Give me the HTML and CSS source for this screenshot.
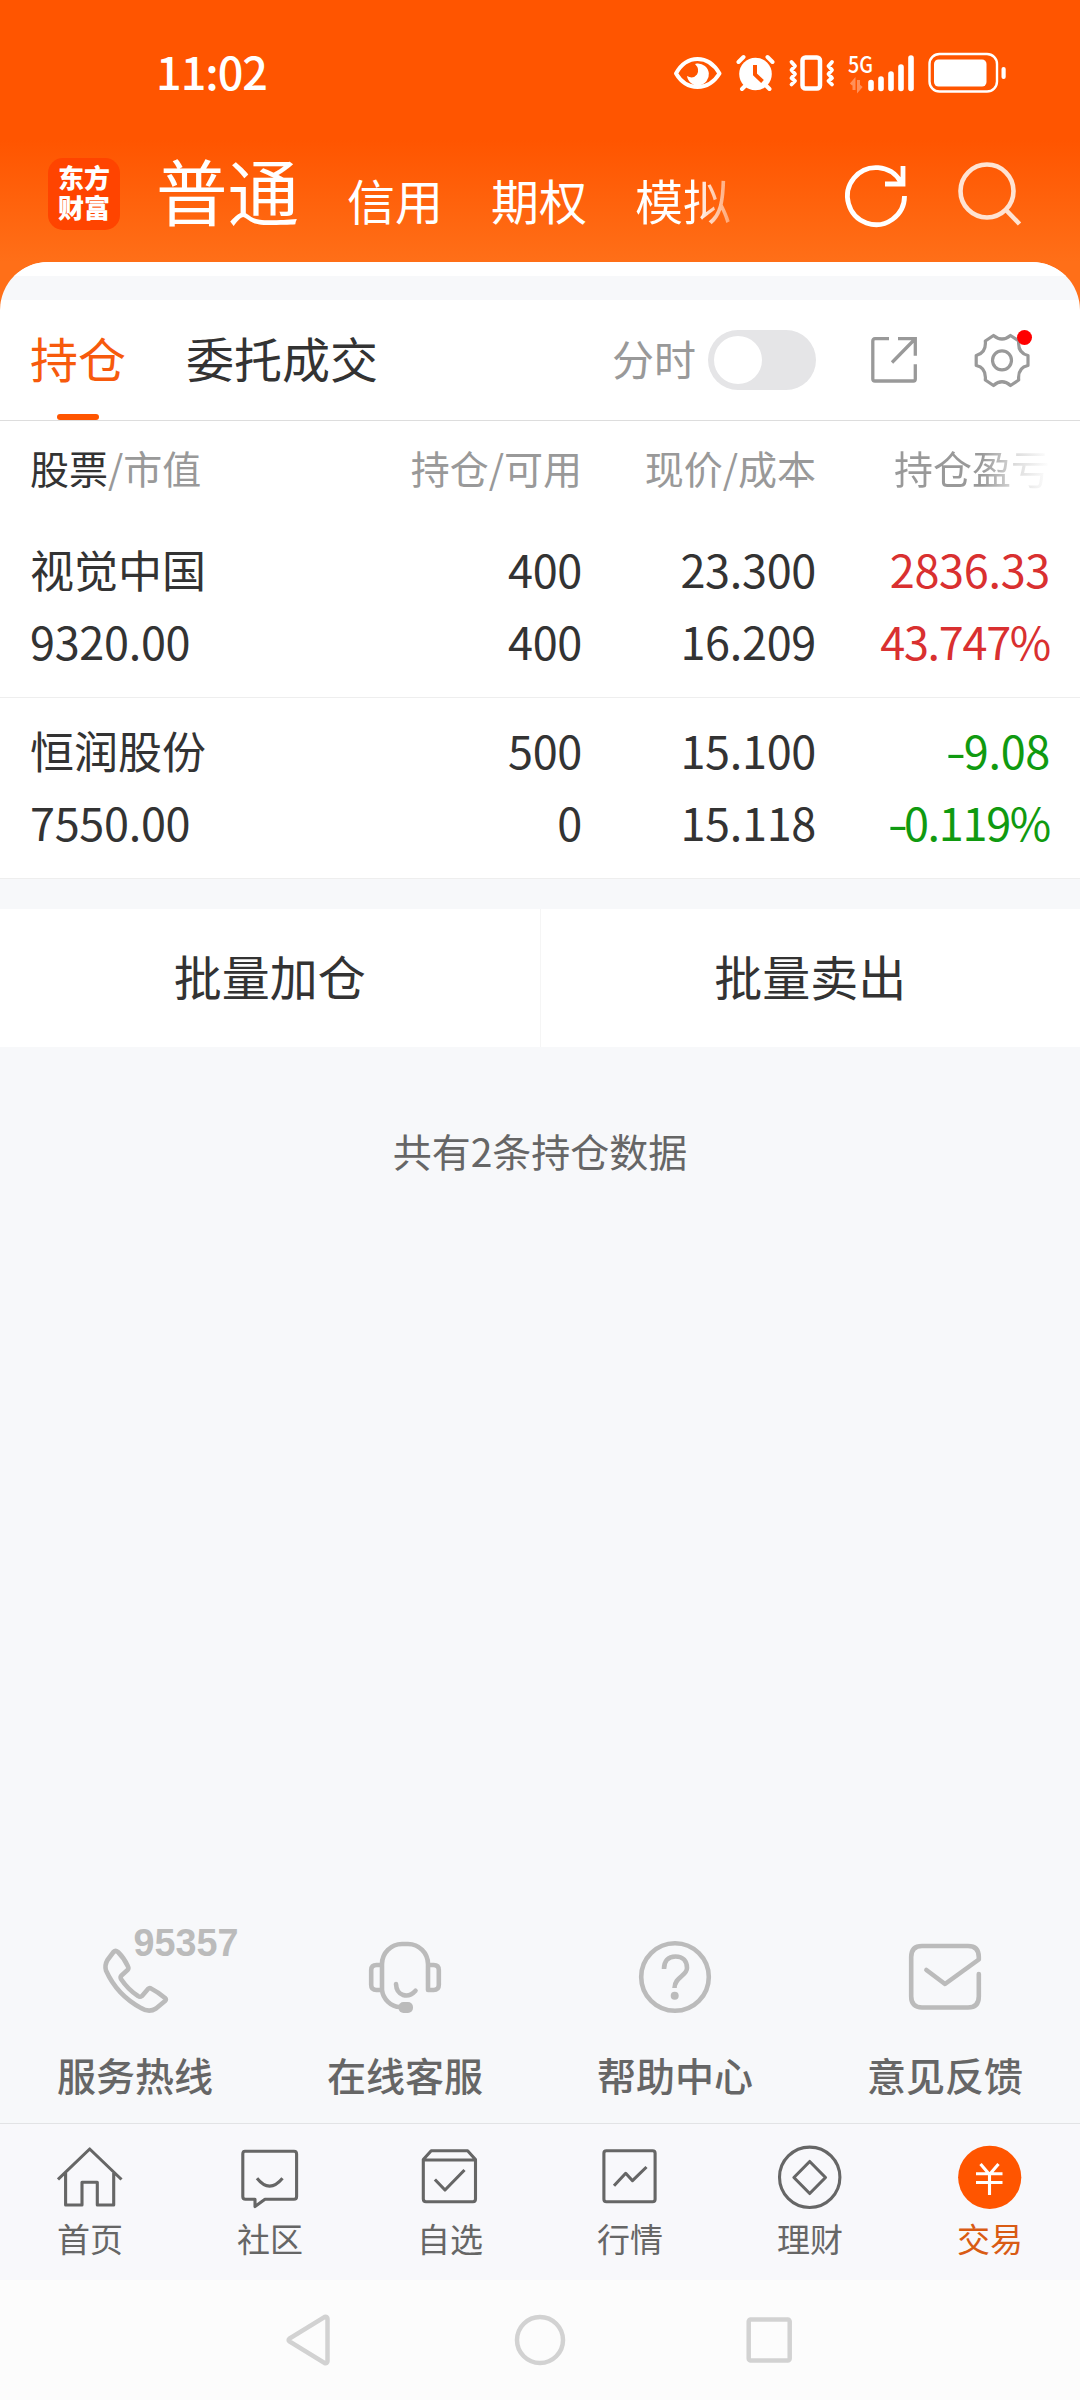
FILE: index.html
```html
<!DOCTYPE html>
<html lang="zh-CN">
<head>
<meta charset="utf-8">
<title>交易 - 持仓</title>
<link rel="stylesheet" href="styles.css">
</head>
<body>
<div class="screen">
  <header class="top">
    <div class="status">
      <span class="time">11:02</span>
      <svg class="status-icons" viewBox="670 43 340 60" fill="none" stroke="#fff">
        <path d="M676 73.500Q684 59 697.500 59T719.500 73.500Q711 87 697.500 87T676 73.500Z" stroke-width="4" stroke-linejoin="round"/>
        <path d="M697 63.500A11 11 0 1 1 687 76Q693 79.500 697 74.500Q700 69 695 64Z" fill="#fff" stroke="none"/>
        <circle cx="755.500" cy="74" r="16.300" fill="#fff" stroke="none"/>
        <path d="M738.500 62L743.500 57M772.500 62L767.500 57M742 89L746 85M769.500 89L765.500 85" stroke-width="4" stroke-linecap="round"/>
        <path d="M755 65V74.500L762.500 81.500" stroke="#ff5500" stroke-width="4"/>
        <rect x="802.500" y="57.500" width="17.500" height="31" rx="3" stroke-width="4.500"/>
        <path d="M791.500 62L795 66L791.500 70L795 74L791.500 78L795 81L791.500 84.500M832 62L828.500 66L832 70L828.500 74L832 78L828.500 81L832 84.500" stroke-width="3.800" stroke-linecap="round" stroke-linejoin="round"/>
        <text class="net" x="848" y="73" textLength="25" lengthAdjust="spacingAndGlyphs">5G</text>
        <path d="M851 84.500L854 81V90M861.500 86L858.500 89.500V80" stroke-width="3" stroke-opacity=".35"/>
        <path d="M871 82.500V88.500M881 79V88.500M891 74V88.500M901 67V88.500M911 58V88.500" stroke-width="5.600" stroke-linecap="round"/>
        <rect x="929.500" y="54" width="67.500" height="37.500" rx="10" stroke-width="2.400"/>
        <rect x="934" y="59.500" width="52.500" height="27" rx="4.500" fill="#fff" stroke="none"/>
        <rect x="1001.500" y="67" width="4.200" height="12" rx="2" fill="#fff" stroke="none"/>
      </svg>
    </div>
    <div class="bar">
      <div class="logo">东方<br>财富</div>
      <nav class="accounts">
        <span class="account current">普通</span>
        <span class="account">信用</span>
        <span class="account">期权</span>
        <span class="account faded">模拟</span>
      </nav>
      <div class="bar-icons">
        <svg class="bar-icon" viewBox="0 0 72 72" fill="none" stroke="#fff" stroke-width="4.800"><path d="M64.500 36A28.500 28.500 0 1 1 60.500 21.500M63 6V24H45"/></svg>
        <svg class="bar-icon" viewBox="0 0 72 72" fill="none" stroke="#ffe3d2" stroke-width="4.600"><circle cx="33" cy="31" r="26.500"/><path d="M52 50L65.500 64"/></svg>
      </div>
    </div>
  </header>

  <main class="sheet">
    <div class="sheet-cap"></div>
    <section class="panel">
      <div class="tabs">
        <span class="tab active">持仓</span>
        <span class="tab">委托成交</span>
        <div class="tools">
          <span class="tool-label">分时</span>
          <span class="switch"></span>
          <svg class="share" viewBox="0 0 50 50" fill="none" stroke="#999" stroke-width="3.300"><path d="M20 3.700H6Q3.800 3.700 3.800 6V44Q3.800 46 6 46H44.500Q46.300 46 46.300 44V29.300M29 3.700H46.300V20.700M45.500 4.500L23 27.500"/></svg>
          <span class="gear">
            <svg viewBox="0 0 60 60" fill="none" stroke="#999" stroke-width="3.200" stroke-linejoin="round"><path d="M21.500 5.500Q30 12.500 38.500 5.500L46.700 11Q45.500 23 56 25.500V35.500Q45.500 37.500 46.700 50L38.500 55.500Q30 48 21.500 55.500L13.300 50Q14.500 37.500 4.200 35.500V25.500Q14.500 23 13.300 11Z"/><circle cx="30" cy="30.300" r="9.500"/></svg>
          </span>
        </div>
      </div>

      <div class="row head">
        <span><b>股票</b>/市值</span>
        <span>持仓/可用</span>
        <span>现价/成本</span>
        <span class="head-fade">持仓盈亏</span>
      </div>
      <div class="row stock">
        <div>视觉中国<br><i>9320.00</i></div>
        <div><i>400</i><br><i>400</i></div>
        <div><i>23.300</i><br><i>16.209</i></div>
        <div class="up"><i>2836.33</i><br><i class="rate">43.747%</i></div>
      </div>
      <div class="row stock">
        <div>恒润股份<br><i>7550.00</i></div>
        <div><i>500</i><br><i>0</i></div>
        <div><i>15.100</i><br><i>15.118</i></div>
        <div class="down"><i><u>-</u>9.08</i><br><i class="rate"><u>-</u>0.119%</i></div>
      </div>
    </section>

    <div class="batch">
      <span>批量加仓</span>
      <span>批量卖出</span>
    </div>
    <p class="summary">共有2条持仓数据</p>
  </main>

  <section class="services">
    <div class="service">
      <svg viewBox="0 0 80 80"><path d="M18.500 15L12.500 23Q9.500 28 11 33.500Q22 58 46 71Q54 76 61 71.500L70 64Q71.500 62.500 70 61Q63 55 56 51.500Q54.500 50.500 53 52L47 59Q45 60.500 43 59Q33 52.500 26 42Q25 40 26.500 38.500L32.500 33Q34 31.500 33 29.500Q29.500 21.500 23 15Q20.500 13 18.500 15Z"/><text class="hotline" x="38.500" y="19" textLength="105" lengthAdjust="spacingAndGlyphs">95357</text></svg>
      <span>服务热线</span>
    </div>
    <div class="service">
      <svg viewBox="0 0 80 80"><path d="M17 53V27A20 20 0 0 1 37 7H43A20 20 0 0 1 63 27V53H68.500Q73.800 53 73.800 48V33Q73.800 28 68.500 28H63M17 28H11.500Q6.200 28 6.200 33V48Q6.200 53 11.500 53H17C18 62 26 70 35 70M31 47C31.500 59 43 62 50.500 53.700"/><rect class="solid" x="33.500" y="65" width="14.500" height="11" rx="5"/></svg>
      <span>在线客服</span>
    </div>
    <div class="service">
      <svg viewBox="0 0 80 80"><circle cx="40" cy="40" r="33.800"/><path class="butt" d="M29 32C29 24 33 19.500 40.500 19.500S52 24 52 31C52 39 39.500 40 39.500 51"/><circle class="solid" cx="39.700" cy="58.800" r="4"/></svg>
      <span>帮助中心</span>
    </div>
    <div class="service">
      <svg viewBox="0 0 80 80"><path d="M73.800 37V59.500Q73.800 70.500 63 70.500H17Q6.200 70.500 6.200 59.500V20Q6.200 9 17 9H63Q73.800 9 73.800 20V22.500L40 47L21.400 33"/></svg>
      <span>意见反馈</span>
    </div>
  </section>

  <nav class="tabbar">
    <div class="item"><svg viewBox="0 0 66 66"><path d="M1 35.500L32.700 5L64.500 35.500M8.600 29V61H25V38.300H40.300V61H56.700V29"/></svg><span>首页</span></div>
    <div class="item"><svg viewBox="0 0 66 66"><path d="M8 7.300H57Q59.600 7.300 59.600 10V52.500Q59.600 55.300 57 55.300H28L18 62.500V55.300H8.500Q5.800 55.300 5.800 52.500V10Q5.800 7.300 8 7.300ZM20 34.300Q32.500 50 45.500 34.300"/></svg><span>社区</span></div>
    <div class="item"><svg viewBox="0 0 66 66"><path d="M6.300 15.500V55Q6.300 57.700 9 57.700H56Q58.500 57.700 58.500 55V15.500L50.600 6.700H14.200ZM6.300 16H58.500M17.900 35.500L28 46L47.500 26"/></svg><span>自选</span></div>
    <div class="item"><svg viewBox="0 0 66 66"><rect x="6.900" y="6.700" width="51.200" height="51" rx="2.500"/><path d="M17 41.700L28.700 29.300L35.500 36.700L49.500 23"/></svg><span>行情</span></div>
    <div class="item"><svg viewBox="0 0 66 66"><circle cx="32.700" cy="33.300" r="30.200"/><path d="M32.700 17.500L48.500 33.500L32.700 49.500L16.900 33.500Z"/></svg><span>理财</span></div>
    <div class="item on"><svg viewBox="0 0 66 66"><circle class="disc" cx="32.700" cy="33.300" r="31.600"/><path class="yen" d="M23.500 20L32.500 30.500L41.500 20M19 29.700H45.500M19 38.500H45.500M32.500 30V51"/></svg><span>交易</span></div>
  </nav>

  <footer class="sysnav">
    <svg viewBox="0 0 60 60"><path d="M10.500 28.500Q9 30 10.500 31.500L45.500 53Q48.500 54 48.500 51V9Q48.500 6 45.500 7Z"/></svg>
    <svg viewBox="0 0 60 60"><circle cx="30" cy="30" r="23"/></svg>
    <svg viewBox="0 0 60 60"><rect x="7.700" y="9.500" width="41" height="41" rx="2"/></svg>
  </footer>
</div>
</body>
</html>
```
FILE: styles.css
```css
* { box-sizing: border-box; }
body {
  margin: 0;
  font-family: "Noto Sans CJK SC", "Noto Sans", sans-serif;
  color: #333;
}
svg { display: block; flex: none; }
.screen {
  width: 1080px;
  height: 2400px;
  display: flex;
  flex-direction: column;
  overflow: hidden;
  background: #f7f8fa;
}

/* orange header */
.top {
  flex: none;
  height: 310px;
  background: linear-gradient(#ff5500 0, #ff5500 140px, #ff6f18 262px);
}
.status {
  height: 146px;
  padding: 0 70px 0 156px;
  display: flex;
  align-items: center;
  justify-content: space-between;
  color: #fff;
}
.time { font-size: 45px; font-weight: 500; line-height: 60px; margin-top: -4px; letter-spacing: -1px; }
.status-icons { width: 340px; height: 60px; }
.net { font-size: 22.500px; font-weight: 500; fill: #fff; stroke: none; }
.bar {
  height: 112px;
  padding: 0 54px 0 48px;
  display: flex;
  align-items: flex-start;
  color: #fff;
}
.logo {
  width: 72px;
  height: 72px;
  margin: 12px 36px 0 0;
  padding-top: 4px;
  border-radius: 15px;
  background: #ff4400;
  text-align: center;
  font-size: 26px;
  font-weight: 900;
  line-height: 30px;
}
.accounts { display: flex; align-items: baseline; gap: 48px; margin-top: -1px; }
.account { font-size: 48px; line-height: 88px; }
.account.current { font-size: 71.500px; }
.faded {
  color: transparent;
  background: linear-gradient(90deg, #fff 60px, rgba(255, 255, 255, .4) 96px);
  -webkit-background-clip: text;
  background-clip: text;
}
.bar-icons { margin: 14px 0 0 auto; display: flex; gap: 42px; }
.bar-icon { width: 72px; height: 72px; }

/* white sheet */
.sheet {
  flex: 1;
  margin-top: -48px;
  border-radius: 48px 48px 0 0;
  overflow: hidden;
}
.sheet-cap { height: 38px; border-top: 14px solid #fff; background: #f7f8fa; }
.panel { background: #fff; }
.tabs {
  height: 121px;
  padding: 0 48px 0 30px;
  display: flex;
  align-items: center;
  gap: 60px;
  border-bottom: 1px solid #ddd;
}
.tab { position: relative; font-size: 48px; line-height: 120px; margin-top: -7px; }
.tab.active { color: #f75a0c; }
.tab.active::after {
  content: "";
  position: absolute;
  left: 27px;
  bottom: -3px;
  width: 42px;
  height: 6px;
  border-radius: 3px;
  background: #ff5500;
}
.tools { margin-left: auto; display: flex; align-items: center; }
.tool-label { font-size: 42px; line-height: 60px; color: #999; margin: -5px 12px 0 0; }
.switch {
  width: 108px;
  height: 60px;
  padding: 6px;
  border-radius: 30px;
  background: #e5e5e7;
}
.switch::before {
  content: "";
  display: block;
  width: 48px;
  height: 48px;
  border-radius: 50%;
  background: #fff;
}
.share { width: 50px; height: 50px; margin: 0 53px; }
.gear { position: relative; width: 60px; height: 60px; }
.gear::after {
  content: "";
  position: absolute;
  left: 45px;
  top: 0;
  width: 15px;
  height: 15px;
  border-radius: 50%;
  background: #f00;
}
.row {
  padding: 0 30px;
  display: grid;
  grid-template-columns: 318px 234px 234px 234px;
}
.row > * + * { text-align: right; }
.head { height: 96px; font-size: 39px; line-height: 92px; color: #999; }
.head b { font-weight: 400; color: #333; }
.head-fade {
  color: transparent;
  background: linear-gradient(90deg, #999 166px, #ddd 200px, #fff 234px);
  -webkit-background-clip: text;
  background-clip: text;
}
.stock {
  height: 181px;
  padding-top: 16px;
  font-size: 44px;
  line-height: 72px;
  border-bottom: 1px solid #eee;
}
.stock i { font-style: normal; font-size: 45px; letter-spacing: -.3px; }
.stock .rate { letter-spacing: -1.300px; }
/* the minus sign is drawn wider than the font's hyphen */
.stock u {
  display: inline-block;
  text-decoration: none;
  transform: scaleX(1.3);
}
.up { color: #d93030; }
.down { color: #109a10; }
.batch {
  height: 138px;
  margin-top: 30px;
  display: flex;
  background: #fff;
}
.batch span {
  flex: 1;
  text-align: center;
  font-size: 48px;
  line-height: 132px;
}
.batch span + span { border-left: 1px solid #f5f5f5; }
.summary {
  margin: 73px 0 0;
  text-align: center;
  font-size: 39px;
  line-height: 60px;
  color: #666;
}

/* service shortcuts */
.services { flex: none; height: 186px; display: flex; }
.service {
  flex: 1;
  display: flex;
  flex-direction: column;
  align-items: center;
  font-size: 39px;
  font-weight: 500;
  line-height: 60px;
  color: #666;
}
.service svg {
  width: 80px;
  height: 80px;
  margin-bottom: 27px;
  overflow: visible;
  fill: none;
  stroke: #bbb;
  stroke-width: 4.600;
  stroke-linecap: round;
  stroke-linejoin: round;
}
.service .solid, .service .hotline { fill: #bbb; stroke: none; }
.service .butt { stroke-linecap: butt; }
.hotline { font: 700 38px "Liberation Sans", sans-serif; }

/* app tab bar */
.tabbar {
  flex: none;
  height: 157px;
  border-top: 1px solid #e2e3e5;
  background: #f8f8fb;
  display: flex;
}
.item {
  flex: 1;
  padding-top: 20px;
  display: flex;
  flex-direction: column;
  align-items: center;
  font-size: 33px;
  line-height: 48px;
  color: #666;
}
.item svg {
  width: 66px;
  height: 66px;
  margin-bottom: 4px;
  fill: none;
  stroke: #666;
  stroke-width: 3.100;
  stroke-linejoin: round;
}
.item.on { color: #d95b14; }
.item .disc { fill: #ff5500; stroke: none; }
.item .yen { stroke: #fff; }

/* system navigation */
.sysnav {
  flex: none;
  height: 120px;
  background: #fcfcfc;
  display: flex;
  align-items: center;
  justify-content: center;
  gap: 171px;
}
.sysnav svg { width: 60px; height: 60px; fill: none; stroke: #d2d2d2; stroke-width: 4.500; }
```
